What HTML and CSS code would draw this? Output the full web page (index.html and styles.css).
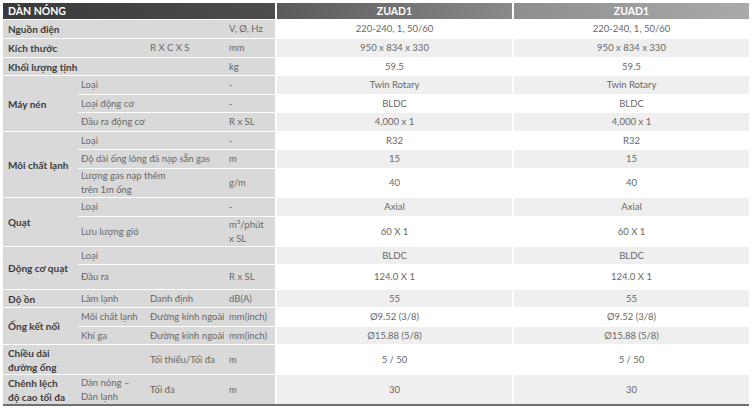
FILE: index.html
```html
<!DOCTYPE html>
<html lang="vi">
<head>
<meta charset="utf-8">
<link rel="stylesheet" href="styles.css">
</head>
<body>
<div class="spec">
  <div class="h hl c4">DÀN NÓNG</div>
  <div class="h v hv1">ZUAD1</div>
  <div class="h v hv2">ZUAD1</div>

  <div class="g c3">Nguồn điện</div><div class="s">V, Ø, Hz</div><div class="v w">220-240, 1, 50/60</div><div class="v w">220-240, 1, 50/60</div>

  <div class="g c2">Kích thước</div><div class="s">R X C X S</div><div class="s">mm</div><div class="v a">950 x 834 x 330</div><div class="v a">950 x 834 x 330</div>

  <div class="g c3">Khối lượng tịnh</div><div class="s">kg</div><div class="v w">59.5</div><div class="v w">59.5</div>

  <div class="g r3">Máy nén</div><div class="s c2">Loại</div><div class="s">-</div><div class="v a">Twin Rotary</div><div class="v a">Twin Rotary</div>
  <div class="s c2">Loại động cơ</div><div class="s">-</div><div class="v w">BLDC</div><div class="v w">BLDC</div>
  <div class="s c2">Đầu ra động cơ</div><div class="s">R x SL</div><div class="v a">4,000 x 1</div><div class="v a">4,000 x 1</div>

  <div class="g r3">Môi chất lạnh</div><div class="s c2">Loại</div><div class="s">-</div><div class="v w">R32</div><div class="v w">R32</div>
  <div class="s c2">Độ dài ống lỏng đã nạp sẵn gas</div><div class="s">m</div><div class="v a">15</div><div class="v a">15</div>
  <div class="s c2"><span>Lượng gas nạp thêm<br>trên 1m ống</span></div><div class="s">g/m</div><div class="v w">40</div><div class="v w">40</div>

  <div class="g r2">Quạt</div><div class="s c2">Loại</div><div class="s">-</div><div class="v a">Axial</div><div class="v a">Axial</div>
  <div class="s c2">Lưu lượng gió</div><div class="s"><span>m<sup>3</sup>/phút<br>x SL</span></div><div class="v w">60 X 1</div><div class="v w">60 X 1</div>

  <div class="g r2">Động cơ quạt</div><div class="s c2">Loại</div><div class="s"></div><div class="v a">BLDC</div><div class="v a">BLDC</div>
  <div class="s c2">Đầu ra</div><div class="s">R x SL</div><div class="v w">124.0 X 1</div><div class="v w">124.0 X 1</div>

  <div class="g">Độ ồn</div><div class="s">Làm lạnh</div><div class="s">Danh định</div><div class="s">dB(A)</div><div class="v a">55</div><div class="v a">55</div>

  <div class="g r2">Ống kết nối</div><div class="s">Môi chất lạnh</div><div class="s">Đường kính ngoài</div><div class="s">mm(inch)</div><div class="v w">Ø9.52 (3/8)</div><div class="v w">Ø9.52 (3/8)</div>
  <div class="s">Khí ga</div><div class="s">Đường kính ngoài</div><div class="s">mm(inch)</div><div class="v a">Ø15.88 (5/8)</div><div class="v a">Ø15.88 (5/8)</div>

  <div class="g"><span>Chiều dài<br>đường ống</span></div><div class="s"></div><div class="s">Tối thiểu/Tối đa</div><div class="s">m</div><div class="v w">5 / 50</div><div class="v w">5 / 50</div>

  <div class="g"><span>Chênh lệch<br>độ cao tối đa</span></div><div class="s"><span>Dàn nóng –<br>Dàn lạnh</span></div><div class="s">Tối đa</div><div class="s">m</div><div class="v a">30</div><div class="v a">30</div>
</div>
</body>
</html>
```
FILE: styles.css
```css
html, body {
  margin: 0;
  padding: 0;
  background: #fff;
}
body {
  padding: 3px 0 0 3px;
  font-family: Lato, "Open Sans", sans-serif;
  font-size: 9.5px;
  color: #686868;
}
.spec {
  width: 746px;
  display: grid;
  grid-template-columns: 75px 69px 79px 49px 237px 237px;
  grid-template-rows: 16px 18px 18px 17px 18px 17px 18px 17px 18px 28px 18px 29px 17px 24px 17px 18px 17px 29px 29px;
  row-gap: 1px;
  background: #fff;
  border-bottom: 2px solid #707070;
}
.spec > div {
  display: flex;
  align-items: center;
  background: #d9d9d9;
  line-height: 14px;
  white-space: nowrap;
}
.h {
  color: #fff;
  font-weight: 700;
  font-size: 10.5px;
}
.spec > .hl {
  padding-left: 5px;
  background: linear-gradient(90deg, #3a3a3a, #4c4c4c);
}
.spec > .hv1 {
  background: linear-gradient(90deg, #5a5a5a, #8a8a8a) padding-box;
}
.spec > .hv2 {
  background: linear-gradient(90deg, #8e8e8e, #aaaaaa) padding-box;
}
.c2 { grid-column: span 2; }
.c3 { grid-column: span 3; }
.c4 { grid-column: span 4; }
.r2 { grid-row: span 2; }
.r3 { grid-row: span 3; }
.g {
  padding-left: 5px;
  font-weight: 700;
  font-size: 10px;
  color: #3c3c3c;
}
.s {
  padding-left: 3px;
}
.spec > .v {
  justify-content: center;
  border-left: 2px solid #fff;
}
.spec > .w { background: #fff; }
.spec > .a { background: #efefef; }
sup {
  font-size: 6px;
  line-height: 0;
  vertical-align: 4px;
}
```
